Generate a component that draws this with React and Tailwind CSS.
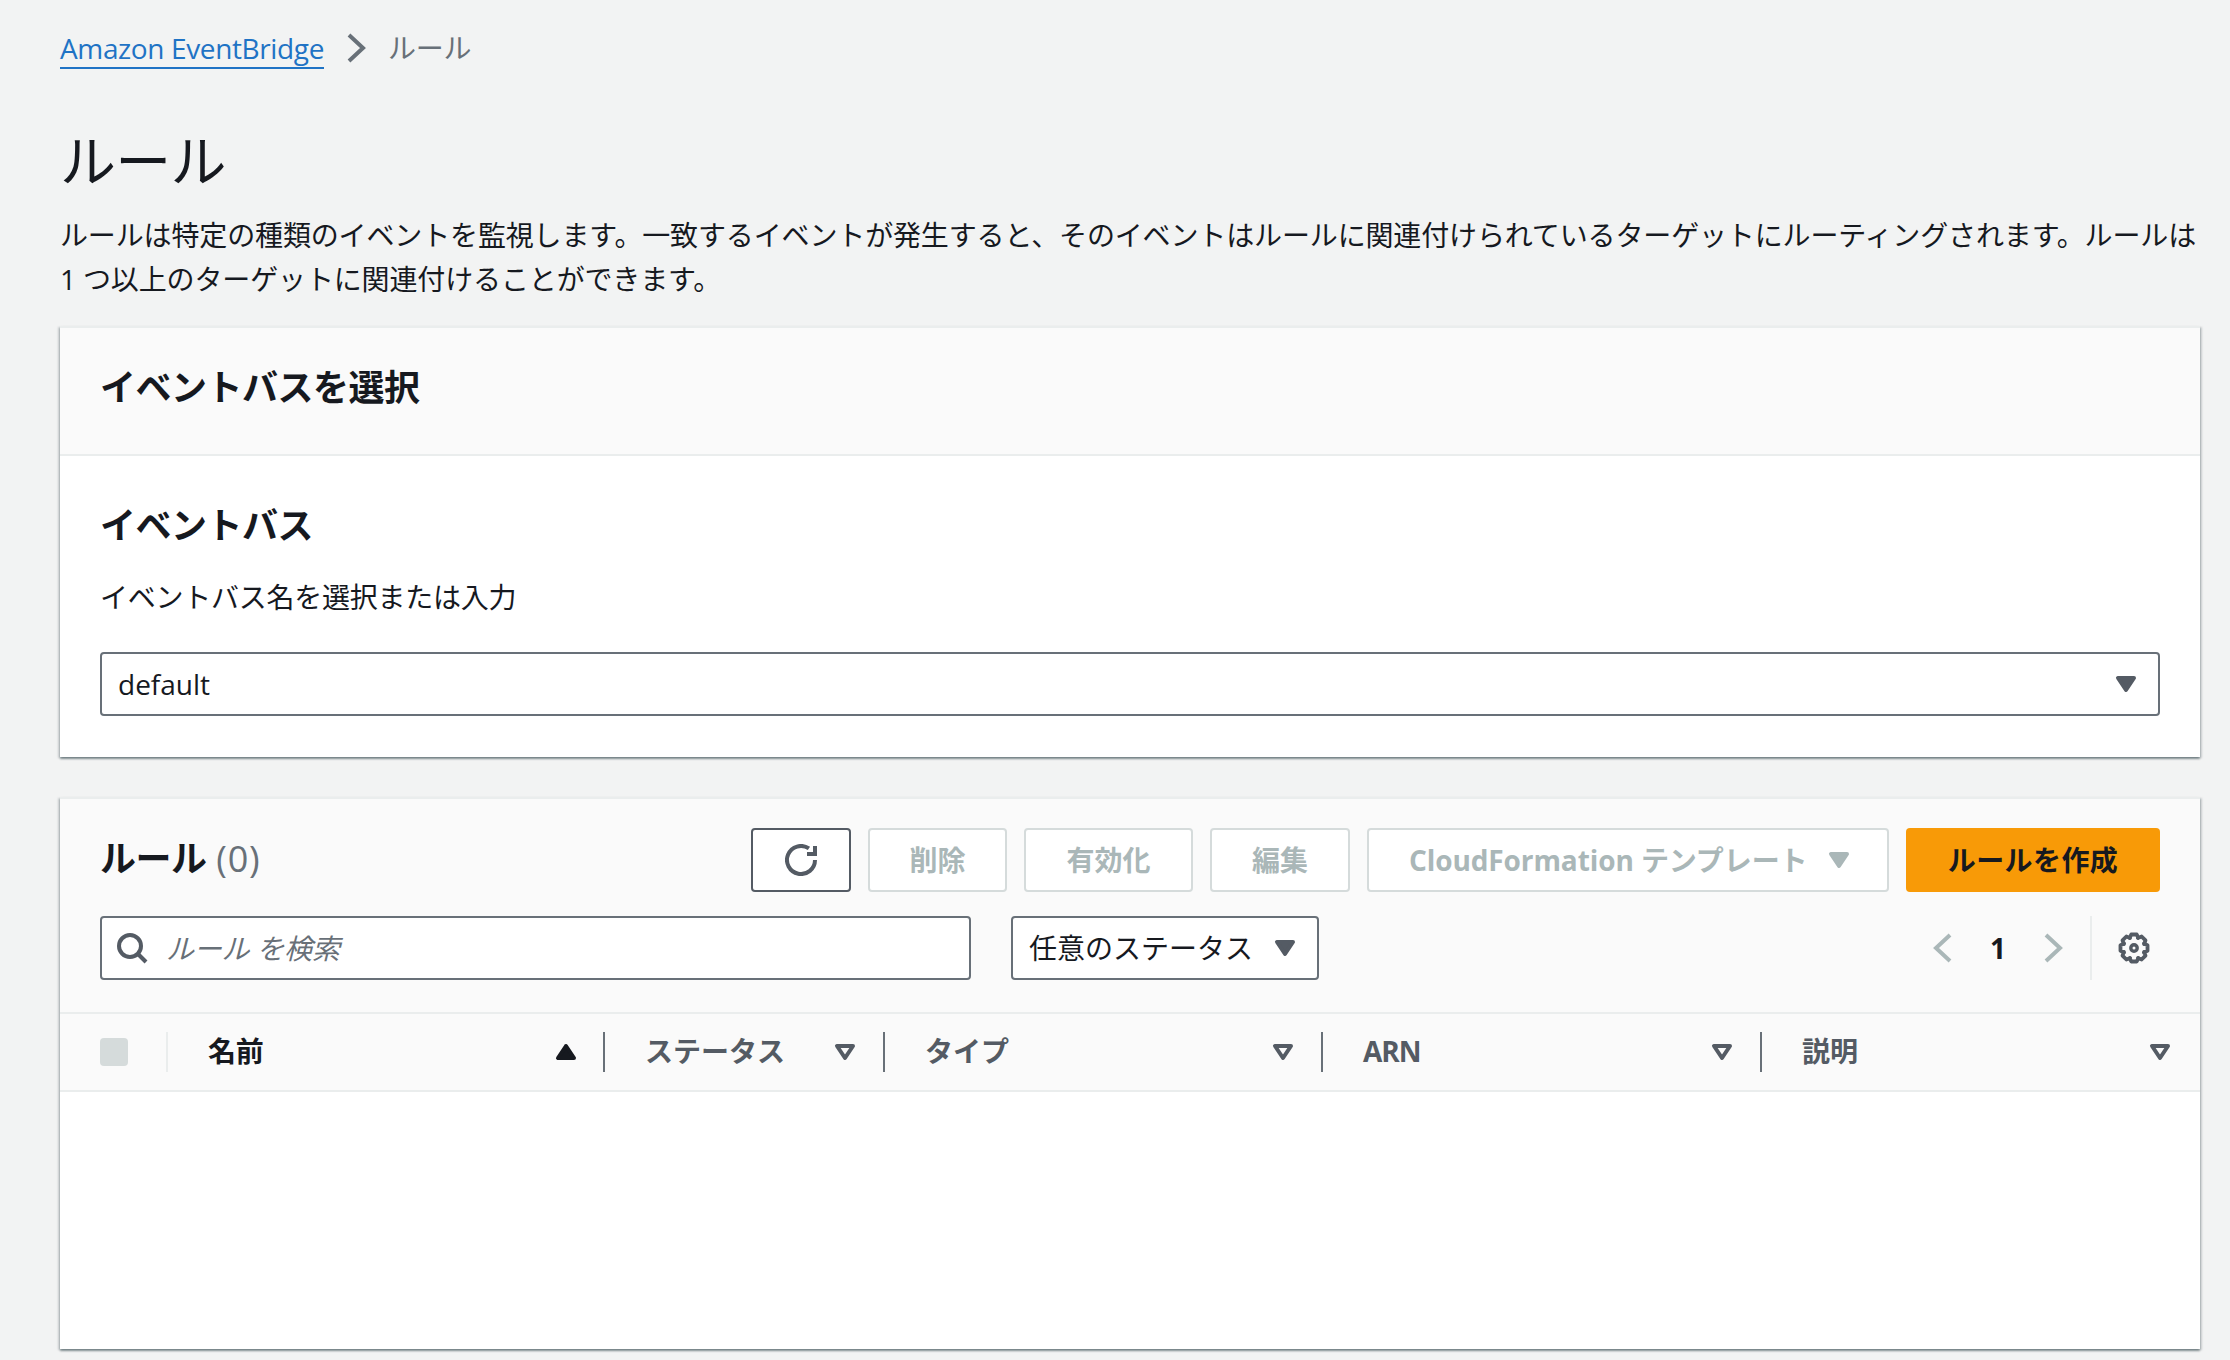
import React from "react";

const Icon = ({ children, className = "" }) => (
  <svg viewBox="0 0 16 16" className={`w-[32px] h-[32px] shrink-0 ${className}`} fill="none" stroke="currentColor" strokeWidth="2">
    {children}
  </svg>
);
const CaretFill = ({ className = "" }) => (
  <Icon className={className}>
    <path d="M4 5h8l-4 6-4-6z" fill="currentColor" strokeLinejoin="round" />
  </Icon>
);
const CaretOutline = ({ className = "" }) => (
  <Icon className={className}>
    <path d="M4 5h8l-4 6-4-6z" strokeLinejoin="round" />
  </Icon>
);
const CaretUp = ({ className = "" }) => (
  <Icon className={className}>
    <path d="M4 11h8L8 5l-4 6z" fill="currentColor" strokeLinejoin="round" />
  </Icon>
);
const ChevronLeft = ({ className = "" }) => (
  <Icon className={className}><path d="M11.5 1.5L4.5 8l7 6.5" /></Icon>
);
const ChevronRight = ({ className = "" }) => (
  <Icon className={className}><path d="M4.5 1.5l7 6.5-7 6.5" /></Icon>
);
const gearPath = (() => {
  const pts = [];
  for (let i = 0; i < 8; i++) {
    const a = (i * Math.PI) / 4 - Math.PI / 2;
    const s = 0.2, t = 0.42;
    [[5.4, -t], [6.9, -s], [6.9, s], [5.4, t]].forEach(([r, d]) =>
      pts.push(`${(8 + r * Math.cos(a + d)).toFixed(2)} ${(8 + r * Math.sin(a + d)).toFixed(2)}`)
    );
  }
  return "M" + pts.join("L") + "Z";
})();

const Button = ({ children, className = "" }) => (
  <div className={`h-[64px] flex items-center justify-center rounded-[4px] border-2 border-[#d5dbdb] bg-white text-[#aab7b8] font-bold ${className}`}>
    {children}
  </div>
);

const Th = ({ w, label, icon, divider = true, dark = false, tracking = "" }) => (
  <div className={`relative h-full flex items-center pl-[40px] pr-[24px] justify-between font-bold ${dark ? "text-[#16191f]" : "text-[#545b64]"} ${w}`}>
    <span className={`pb-[2px] ${tracking}`}>{label}</span>
    {icon}
    {divider && <span className="absolute right-0 top-[18px] h-[40px] w-[2px] bg-[#687078]" />}
  </div>
);

export default function App() {
  return (
    <div className="min-h-[1360px] bg-[#f2f3f3] pl-[60px] pr-[30px] pt-[26px] pb-[11px] font-['Open_Sans','Noto_Sans_CJK_JP',sans-serif] text-[28px] leading-[44px] text-[#16191f]">
      <nav className="flex items-center h-[44px]">
        <a className="text-[#1f73c5] border-b-2 border-[#1f73c5] leading-[38px] mt-[2px] tracking-[-0.37px]">Amazon EventBridge</a>
        <ChevronRight className="text-[#687078] ml-[16px] mr-[16px]" />
        <span className="text-[#687078] tracking-[-0.3px]">ルール</span>
      </nav>

      <h1 className="mt-[54px] text-[56px] leading-[72px] font-normal tracking-[-0.8px]">ルール</h1>
      <p className="mt-[17px] tracking-[-0.14px]">
        ルールは特定の種類のイベントを監視します。一致するイベントが発生すると、そのイベントはルールに関連付けられているターゲットにルーティングされます。ルールは 1 つ以上のターゲットに関連付けることができます。
      </p>

      <section className="mt-[25px] bg-white border-t-2 border-[#eaeded] shadow-[0_2px_2px_0_rgba(0,28,36,0.4),2px_1px_2px_0_rgba(0,28,36,0.15),-2px_1px_2px_0_rgba(0,28,36,0.15)]">
        <div className="h-[128px] bg-[#fafafa] border-b-2 border-[#eaeded] flex items-center px-[40px] pb-[6px]">
          <h2 className="text-[36px] font-bold tracking-[-0.5px]">イベントバスを選択</h2>
        </div>
        <div className="px-[40px] pt-[48px] pb-[41px]">
          <h3 className="text-[36px] font-bold tracking-[-0.5px]">イベントバス</h3>
          <div className="mt-[27px] tracking-[-0.25px]">イベントバス名を選択または入力</div>
          <div className="mt-[33px] h-[64px] flex items-center justify-between border-2 border-[#687078] rounded-[4px] pl-[16px] pr-[16px] bg-white">
            <span>default</span>
            <CaretFill className="text-[#545b64]" />
          </div>
        </div>
      </section>

      <section className="mt-[40px] bg-white border-t-2 border-[#eaeded] shadow-[0_2px_2px_0_rgba(0,28,36,0.4),2px_1px_2px_0_rgba(0,28,36,0.15),-2px_1px_2px_0_rgba(0,28,36,0.15)]">
        <div className="bg-[#fafafa] px-[40px] pt-[29px] pb-[32px] border-b-2 border-[#eaeded]">
          <div className="flex items-center justify-between">
            <h2 className="text-[36px] font-bold tracking-[-0.5px] pb-[2px]">
              ルール <span className="ml-[1px] font-normal text-[#687078] tracking-[0.7px]">(0)</span>
            </h2>
            <div className="flex items-center gap-[17px]">
              <div className="h-[64px] w-[100px] flex items-center justify-center rounded-[4px] border-2 border-[#545b64] bg-white text-[#545b64]">
                <Icon>
                  <path d="M15 8a7 7 0 1 1-3.04-5.77" />
                  <path d="M15 1v4h-4" />
                </Icon>
              </div>
              <Button className="w-[139px]">削除</Button>
              <Button className="w-[169px]">有効化</Button>
              <Button className="w-[140px]">編集</Button>
              <Button className="w-[522px] !justify-start pl-[40px] gap-[16px]">
                <span className="tracking-[-0.1px]">CloudFormation テンプレート</span>
                <CaretFill />
              </Button>
              <div className="h-[64px] w-[254px] flex items-center justify-center rounded-[4px] bg-[#f89a07] text-[#16191f] font-bold tracking-[0.4px]">
                ルールを作成
              </div>
            </div>
          </div>
          <div className="mt-[24px] flex items-center h-[64px]">
            <div className="h-full w-[871px] flex items-center border-2 border-[#687078] rounded-[4px] bg-white pl-[14px]">
              <Icon className="text-[#545b64]">
                <circle cx="7" cy="7" r="5.5" />
                <path d="M15 15l-4-4" />
              </Icon>
              <span className="ml-[18px] italic text-[#687078] tracking-[-0.2px]">ルール を検索</span>
            </div>
            <div className="ml-[40px] h-full w-[308px] flex items-center justify-between border-2 border-[#687078] rounded-[4px] bg-white pl-[16px] pr-[16px]">
              <span>任意のステータス</span>
              <CaretFill className="text-[#545b64]" />
            </div>
            <div className="ml-auto flex items-center h-full">
              <ChevronLeft className="text-[#aab7b8]" />
              <span className="w-[78px] text-center font-bold">1</span>
              <ChevronRight className="text-[#aab7b8]" />
              <span className="ml-[21px] h-full w-[2px] bg-[#eaeded]" />
              <svg viewBox="0 0 16 16" className="ml-[26px] mr-[10px] w-[32px] h-[32px] text-[#545b64]" fill="none" stroke="currentColor" strokeWidth="1.9" strokeLinejoin="round">
                <path d={gearPath} />
                <circle cx="8" cy="8" r="1.6" strokeWidth="1.7" />
              </svg>
            </div>
          </div>
        </div>

        <div className="h-[78px] bg-[#fafafa] border-b-2 border-[#eaeded] flex items-center">
          <div className="relative w-[108px] h-full shrink-0 flex items-center pl-[40px]">
            <span className="w-[28px] h-[28px] rounded-[4px] bg-[#d5dbdb]" />
            <span className="absolute right-0 top-[18px] h-[40px] w-[2px] bg-[#eaeded]" />
          </div>
          <Th w="w-[437px]" label="名前" dark tracking="tracking-[-0.3px]" icon={<CaretUp className="text-[#16191f] mr-[-1px]" />} />
          <Th w="w-[280px]" label="ステータス" icon={<CaretOutline />} />
          <Th w="w-[438px]" label="タイプ" icon={<CaretOutline />} />
          <Th w="w-[439px]" label="ARN" tracking="tracking-[-1px]" icon={<CaretOutline />} />
          <Th w="flex-1" label="説明" divider={false} icon={<CaretOutline />} />
        </div>
        <div className="h-[257px] bg-white" />
      </section>
    </div>
  );
}
